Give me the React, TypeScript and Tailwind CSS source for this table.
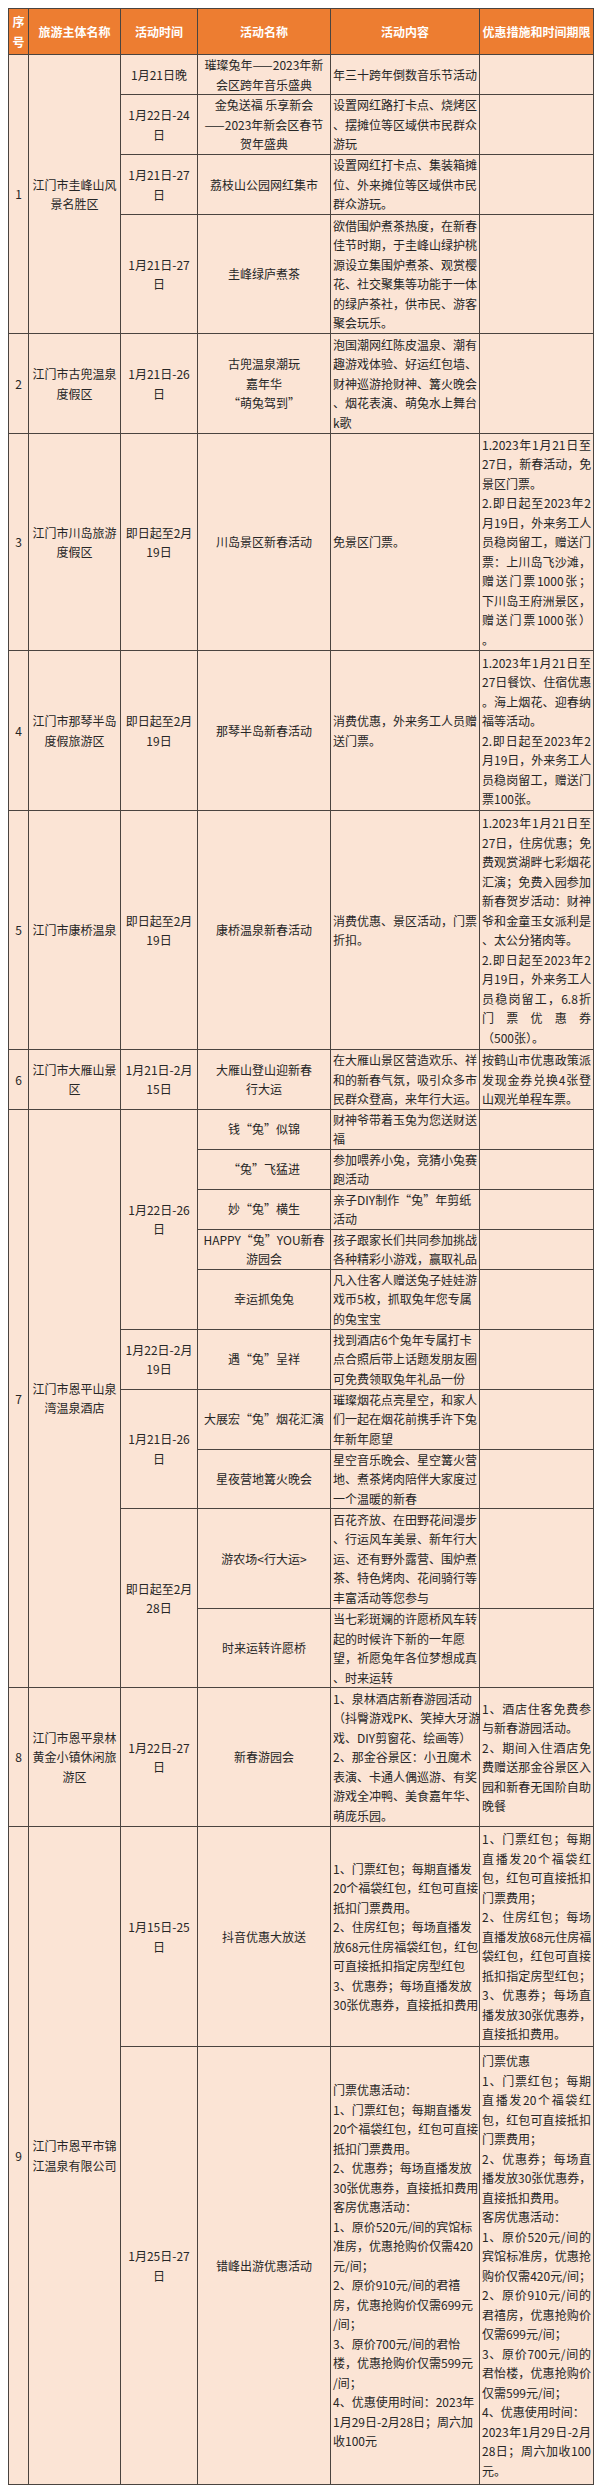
import React from "react";

type Lines = string[];

const B = "border border-[#4a4440] align-middle p-0 leading-[19.5px]";

function T({ lines, just = false }: { lines: Lines; just?: boolean }) {
  return (
    <>
      {lines.map((l, i) => {
        const nj = l.startsWith("~");
        const t = nj ? l.slice(1) : l;
        const j = just && !nj;
        return (
          <div
            key={i}
            className={`whitespace-nowrap ${j ? "text-justify [text-align-last:justify]" : ""}`}
          >
            {t}
          </div>
        );
      })}
    </>
  );
}

function C1({ v, rs }: { v: string; rs?: number }) {
  return (
    <td rowSpan={rs} className={`${B} text-center`}>
      {v}
    </td>
  );
}
function Cc({ l, rs }: { l: Lines; rs?: number }) {
  return (
    <td rowSpan={rs} className={`${B} text-center px-[2px]`}>
      <T lines={l} />
    </td>
  );
}
function C5({ l, rs }: { l: Lines; rs?: number }) {
  return (
    <td rowSpan={rs} className={`${B} text-left pl-[2px] pr-0`}>
      <T lines={l} />
    </td>
  );
}
function C6({ l, rs }: { l: Lines; rs?: number }) {
  return (
    <td rowSpan={rs} className={`${B} text-left pl-[2px] pr-[2px]`}>
      <T lines={l} just />
    </td>
  );
}

export default function App() {
  return (
    <div className="bg-white pt-[8px] pl-[8px] pb-[7px] font-['Noto_Sans_CJK_SC','Noto_Sans',sans-serif] text-[12px] text-[#262626]">
      <table className="border-collapse table-fixed w-[585px] bg-[#fbe4d5]">
        <colgroup>
          <col className="w-[20px]" />
          <col className="w-[92px]" />
          <col className="w-[77px]" />
          <col className="w-[133px]" />
          <col className="w-[149px]" />
          <col className="w-[114px]" />
        </colgroup>
        <thead>
          <tr className="h-[46px] bg-[#ed7d31] text-white font-bold">
            <th className={`${B} text-center leading-[20px]`}>
              <div>序</div>
              <div>号</div>
            </th>
            <th className={`${B} text-center`}>旅游主体名称</th>
            <th className={`${B} text-center`}>活动时间</th>
            <th className={`${B} text-center`}>活动名称</th>
            <th className={`${B} text-center`}>活动内容</th>
            <th className={`${B} text-center whitespace-nowrap`}>优惠措施和时间期限</th>
          </tr>
        </thead>
        <tbody>
          {/* Row 1 */}
          <tr className="h-[40px]">
            <C1 v="1" rs={4} />
            <Cc l={["江门市圭峰山风", "景名胜区"]} rs={4} />
            <Cc l={["1月21日晚"]} />
            <Cc l={["璀璨兔年——2023年新", "会区跨年音乐盛典"]} />
            <C5 l={["年三十跨年倒数音乐节活动"]} />
            <C6 l={[]} />
          </tr>
          <tr className="h-[60px]">
            <Cc l={["1月22日-24", "日"]} />
            <Cc l={["金兔送福 乐享新会", "——2023年新会区春节", "贺年盛典"]} />
            <C5 l={["设置网红路打卡点、烧烤区", "、摆摊位等区域供市民群众", "游玩"]} />
            <C6 l={[]} />
          </tr>
          <tr className="h-[60px]">
            <Cc l={["1月21日-27", "日"]} />
            <Cc l={["荔枝山公园网红集市"]} />
            <C5 l={["设置网红打卡点、集装箱摊", "位、外来摊位等区域供市民", "群众游玩。"]} />
            <C6 l={[]} />
          </tr>
          <tr className="h-[119px]">
            <Cc l={["1月21日-27", "日"]} />
            <Cc l={["圭峰绿庐煮茶"]} />
            <C5
              l={[
                "欲借围炉煮茶热度，在新春",
                "佳节时期，于圭峰山绿护桃",
                "源设立集围炉煮茶、观赏樱",
                "花、社交聚集等功能于一体",
                "的绿庐茶社，供市民、游客",
                "聚会玩乐。",
              ]}
            />
            <C6 l={[]} />
          </tr>
          {/* Row 2 */}
          <tr className="h-[100px]">
            <C1 v="2" />
            <Cc l={["江门市古兜温泉", "度假区"]} />
            <Cc l={["1月21日-26", "日"]} />
            <Cc l={["古兜温泉潮玩", "嘉年华", "“萌兔驾到”"]} />
            <C5
              l={[
                "泡国潮网红陈皮温泉、潮有",
                "趣游戏体验、好运红包墙、",
                "财神巡游抢财神、篝火晚会",
                "、烟花表演、萌兔水上舞台",
                "k歌",
              ]}
            />
            <C6 l={[]} />
          </tr>
          {/* Row 3 */}
          <tr className="h-[217px]">
            <C1 v="3" />
            <Cc l={["江门市川岛旅游", "度假区"]} />
            <Cc l={["即日起至2月", "19日"]} />
            <Cc l={["川岛景区新春活动"]} />
            <C5 l={["免景区门票。"]} />
            <C6
              l={[
                "1.2023年1月21日至",
                "27日，新春活动，免",
                "~景区门票。",
                "2.即日起至2023年2",
                "月19日，外来务工人",
                "员稳岗留工，赠送门",
                "票：上川岛飞沙滩，",
                "赠送门票1000张；",
                "下川岛王府洲景区，",
                "赠送门票1000张）",
                "~。",
              ]}
            />
          </tr>
          {/* Row 4 */}
          <tr className="h-[160px]">
            <C1 v="4" />
            <Cc l={["江门市那琴半岛", "度假旅游区"]} />
            <Cc l={["即日起至2月", "19日"]} />
            <Cc l={["那琴半岛新春活动"]} />
            <C5 l={["消费优惠，外来务工人员赠", "送门票。"]} />
            <C6
              l={[
                "1.2023年1月21日至",
                "27日餐饮、住宿优惠",
                "。海上烟花、迎春纳",
                "~福等活动。",
                "2.即日起至2023年2",
                "月19日，外来务工人",
                "员稳岗留工，赠送门",
                "~票100张。",
              ]}
            />
          </tr>
          {/* Row 5 */}
          <tr className="h-[239px]">
            <C1 v="5" />
            <Cc l={["江门市康桥温泉"]} />
            <Cc l={["即日起至2月", "19日"]} />
            <Cc l={["康桥温泉新春活动"]} />
            <C5 l={["消费优惠、景区活动，门票", "折扣。"]} />
            <C6
              l={[
                "1.2023年1月21日至",
                "27日，住房优惠；免",
                "费观赏湖畔七彩烟花",
                "汇演；免费入园参加",
                "新春贺岁活动：财神",
                "爷和金童玉女派利是",
                "~、太公分猪肉等。",
                "2.即日起至2023年2",
                "月19日，外来务工人",
                "员稳岗留工，6.8折",
                "门票优惠券",
                "~（500张）。",
              ]}
            />
          </tr>
          {/* Row 6 */}
          <tr className="h-[59px]">
            <C1 v="6" />
            <Cc l={["江门市大雁山景", "区"]} />
            <Cc l={["1月21日-2月", "15日"]} />
            <Cc l={["大雁山登山迎新春", "行大运"]} />
            <C5 l={["在大雁山景区营造欢乐、祥", "和的新春气氛，吸引众多市", "民群众登高，来年行大运。"]} />
            <C6 l={["按鹤山市优惠政策派", "发现金券兑换4张登", "~山观光单程车票。"]} />
          </tr>
          {/* Row 7 */}
          <tr className="h-[40px]">
            <C1 v="7" rs={10} />
            <Cc l={["江门市恩平山泉", "湾温泉酒店"]} rs={10} />
            <Cc l={["1月22日-26", "日"]} rs={5} />
            <Cc l={["钱“兔”似锦"]} />
            <C5 l={["财神爷带着玉兔为您送财送", "福"]} />
            <C6 l={[]} />
          </tr>
          <tr className="h-[40px]">
            <Cc l={["“兔”飞猛进"]} />
            <C5 l={["参加喂养小兔，竞猜小兔赛", "跑活动"]} />
            <C6 l={[]} />
          </tr>
          <tr className="h-[40px]">
            <Cc l={["妙“兔”横生"]} />
            <C5 l={["亲子DIY制作“兔”年剪纸", "活动"]} />
            <C6 l={[]} />
          </tr>
          <tr className="h-[40px]">
            <Cc l={["HAPPY“兔”YOU新春", "游园会"]} />
            <C5 l={["孩子跟家长们共同参加挑战", "各种精彩小游戏，赢取礼品"]} />
            <C6 l={[]} />
          </tr>
          <tr className="h-[60px]">
            <Cc l={["幸运抓兔兔"]} />
            <C5 l={["凡入住客人赠送兔子娃娃游", "戏币5枚，抓取兔年您专属", "的兔宝宝"]} />
            <C6 l={[]} />
          </tr>
          <tr className="h-[60px]">
            <Cc l={["1月22日-2月", "19日"]} />
            <Cc l={["遇“兔”呈祥"]} />
            <C5 l={["找到酒店6个兔年专属打卡", "点合照后带上话题发朋友圈", "可免费领取兔年礼品一份"]} />
            <C6 l={[]} />
          </tr>
          <tr className="h-[60px]">
            <Cc l={["1月21日-26", "日"]} rs={2} />
            <Cc l={["大展宏“兔”烟花汇演"]} />
            <C5 l={["璀璨烟花点亮星空，和家人", "们一起在烟花前携手许下兔", "年新年愿望"]} />
            <C6 l={[]} />
          </tr>
          <tr className="h-[59px]">
            <Cc l={["星夜营地篝火晚会"]} />
            <C5 l={["星空音乐晚会、星空篝火营", "地、煮茶烤肉陪伴大家度过", "一个温暖的新春"]} />
            <C6 l={[]} />
          </tr>
          <tr className="h-[100px]">
            <Cc l={["即日起至2月", "28日"]} rs={2} />
            <Cc l={["游农场<行大运>"]} />
            <C5
              l={[
                "百花齐放、在田野花间漫步",
                "、行运风车美景、新年行大",
                "运、还有野外露营、围炉煮",
                "茶、特色烤肉、花间骑行等",
                "丰富活动等您参与",
              ]}
            />
            <C6 l={[]} />
          </tr>
          <tr className="h-[78px]">
            <Cc l={["时来运转许愿桥"]} />
            <C5
              l={[
                "当七彩斑斓的许愿桥风车转",
                "起的时候许下新的一年愿",
                "望，祈愿兔年各位梦想成真",
                "、时来运转",
              ]}
            />
            <C6 l={[]} />
          </tr>
          {/* Row 8 */}
          <tr className="h-[139px]">
            <C1 v="8" />
            <Cc l={["江门市恩平泉林", "黄金小镇休闲旅", "游区"]} />
            <Cc l={["1月22日-27", "日"]} />
            <Cc l={["新春游园会"]} />
            <C5
              l={[
                "1、泉林酒店新春游园活动",
                "（抖臀游戏PK、笑掉大牙游",
                "戏、DIY剪窗花、绘画等）",
                "2、那金谷景区：小丑魔术",
                "表演、卡通人偶巡游、有奖",
                "游戏全冲鸭、美食嘉年华、",
                "萌庞乐园。",
              ]}
            />
            <C6
              l={[
                "1、酒店住客免费参",
                "~与新春游园活动。",
                "2、期间入住酒店免",
                "费赠送那金谷景区入",
                "园和新春无国阶自助",
                "~晚餐",
              ]}
            />
          </tr>
          {/* Row 9 */}
          <tr className="h-[220px]">
            <C1 v="9" rs={2} />
            <Cc l={["江门市恩平市锦", "江温泉有限公司"]} rs={2} />
            <Cc l={["1月15日-25", "日"]} />
            <Cc l={["抖音优惠大放送"]} />
            <C5
              l={[
                "1、门票红包；每期直播发",
                "20个福袋红包，红包可直接",
                "抵扣门票费用。",
                "2、住房红包；每场直播发",
                "放68元住房福袋红包，红包",
                "可直接抵扣指定房型红包",
                "3、优惠券；每场直播发放",
                "30张优惠券，直接抵扣费用",
              ]}
            />
            <C6
              l={[
                "1、门票红包；每期",
                "直播发20个福袋红",
                "包，红包可直接抵扣",
                "~门票费用；",
                "2、住房红包；每场",
                "直播发放68元住房福",
                "袋红包，红包可直接",
                "抵扣指定房型红包；",
                "3、优惠券；每场直",
                "播发放30张优惠券，",
                "~直接抵扣费用。",
              ]}
            />
          </tr>
          <tr className="h-[438px]">
            <Cc l={["1月25日-27", "日"]} />
            <Cc l={["错峰出游优惠活动"]} />
            <C5
              l={[
                "门票优惠活动：",
                "1、门票红包；每期直播发",
                "20个福袋红包，红包可直接",
                "抵扣门票费用。",
                "2、优惠券；每场直播发放",
                "30张优惠券，直接抵扣费用",
                "客房优惠活动：",
                "1、原价520元/间的宾馆标",
                "准房，优惠抢购价仅需420",
                "元/间；",
                "2、原价910元/间的君禧",
                "房，优惠抢购价仅需699元",
                "/间；",
                "3、原价700元/间的君怡",
                "楼，优惠抢购价仅需599元",
                "/间；",
                "4、优惠使用时间：2023年",
                "1月29日-2月28日；周六加",
                "收100元",
              ]}
            />
            <C6
              l={[
                "~门票优惠",
                "1、门票红包；每期",
                "直播发20个福袋红",
                "包，红包可直接抵扣",
                "~门票费用；",
                "2、优惠券；每场直",
                "播发放30张优惠券，",
                "~直接抵扣费用。",
                "~客房优惠活动：",
                "1、原价520元/间的",
                "宾馆标准房，优惠抢",
                "购价仅需420元/间；",
                "2、原价910元/间的",
                "君禧房，优惠抢购价",
                "~仅需699元/间；",
                "3、原价700元/间的",
                "君怡楼，优惠抢购价",
                "~仅需599元/间；",
                "~4、优惠使用时间：",
                "2023年1月29日-2月",
                "28日；周六加收100",
                "~元。",
              ]}
            />
          </tr>
        </tbody>
      </table>
    </div>
  );
}
